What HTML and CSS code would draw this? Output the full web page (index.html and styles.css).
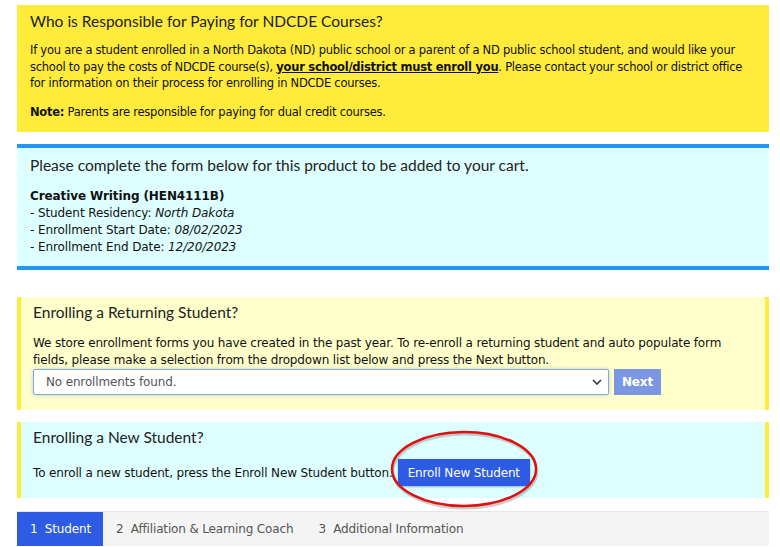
FILE: index.html
```html
<!DOCTYPE html>
<html lang="en">
<head>
    <meta charset="UTF-8">
    <meta name="viewport" content="width=device-width, initial-scale=1.0">
    <title>Enroll</title>
    <link rel="stylesheet" href="styles.css">
</head>
<body>
    <div class="page">
        <div class="panel panel-yellow">
            <h3>Who is Responsible for Paying for NDCDE Courses?</h3>
            <p>If you are a student enrolled in a North Dakota (ND) public school or a parent of a ND public school student, and would like your school to pay the costs of NDCDE course(s), <span class="must">your school/district must enroll you</span>. Please contact your school or district office for information on their process for enrolling in NDCDE courses.</p>
            <p><b>Note:</b> Parents are responsible for paying for dual credit courses.</p>
        </div>

        <div class="panel panel-blue">
            <h3>Please complete the form below for this product to be added to your cart.</h3>
            <p>
                <b>Creative Writing (HEN4111B)</b><br>
                - Student Residency: <i>North Dakota</i><br>
                - Enrollment Start Date: <i>08/02/2023</i><br>
                - Enrollment End Date: <i>12/20/2023</i>
            </p>
        </div>

        <div class="note note-returning">
            <h3>Enrolling a Returning Student?</h3>
            <p>We store enrollment forms you have created in the past year. To re-enroll a returning student and auto populate form fields, please make a selection from the dropdown list below and press the Next button.</p>
            <div class="select-row">
                <div class="select">
                    <span>No enrollments found.</span>
                    <svg width="10" height="6" viewBox="0 0 10 6"><path d="M1 1l4 4 4-4" fill="none" stroke="#333" stroke-width="1.6"/></svg>
                </div>
                <button class="btn btn-next">Next</button>
            </div>
        </div>

        <div class="note note-new">
            <h3>Enrolling a New Student?</h3>
            <div class="new-row">
                <span>To enroll a new student, press the Enroll New Student button.</span>
                <span class="circled">
                    <button class="btn btn-enroll">Enroll New Student</button>
                    <svg class="ring" width="160" height="86" viewBox="0 0 160 86">
                        <ellipse cx="80" cy="43" rx="72" ry="37" fill="none" stroke="#999" stroke-width="3" opacity="0.5" transform="translate(1,2)"/>
                        <ellipse cx="80" cy="43" rx="72" ry="37" fill="none" stroke="#e01010" stroke-width="2.5"/>
                    </svg>
                </span>
            </div>
        </div>

        <div class="tabs">
            <div class="tab active">1&nbsp; Student</div>
            <div class="tab">2&nbsp; Affiliation &amp; Learning Coach</div>
            <div class="tab">3&nbsp; Additional Information</div>
        </div>
    </div>
</body>
</html>
```

FILE: styles.css
```css
body {
    margin: 0;
    font-family: "DejaVu Sans", Verdana, sans-serif;
    font-size: 12px;
    letter-spacing: -0.15px;
    color: #111;
    background-color: #fff;
}

.page {
    width: 752px;
    padding: 5px 0 0 17px;
}

h3 {
    font-family: Lato, "Open Sans", sans-serif;
    font-weight: 400;
    font-size: 15.5px;
    letter-spacing: 0;
    color: #222;
    margin: 0 0 10px;
}

p {
    margin: 0;
    line-height: 16.5px;
}

.panel {
    padding: 7px 13px 12px;
}

.panel-yellow {
    background-color: #ffeb3b;
    font-size: 11.5px;
    letter-spacing: -0.25px;
}

.panel-yellow h3 {
    margin-bottom: 12px;
}

.panel-yellow p + p {
    margin-top: 12px;
}

.must {
    font-weight: bold;
    text-decoration: underline;
}

.panel-blue {
    margin-top: 12px;
    background-color: #ddffff;
    border-top: 4px solid #2196f3;
    border-bottom: 4px solid #2196f3;
    padding: 8px 13px 10px;
    letter-spacing: -0.1px;
}

.panel-blue h3 {
    margin-bottom: 14px;
}

.panel-blue p {
    line-height: 17px;
}

.note {
    border-left: 4px solid #ffeb3b;
    border-right: 4px solid #ffeb3b;
    padding: 6px 12px 15px;
}

.note h3 {
    margin-bottom: 14px;
}

.note-returning {
    margin-top: 27px;
    background-color: #ffffcc;
}

.note-new {
    margin-top: 12px;
    background-color: #ddffff;
    padding-bottom: 12px;
}

.note-new h3 {
    margin-bottom: 13px;
}

.select-row {
    display: flex;
    gap: 5px;
    margin-top: 1px;
}

.select {
    width: 556px;
    height: 24px;
    border: 1px solid #8aa8d0;
    border-radius: 2px;
    background-color: #fff;
    box-shadow: 0 0 4px rgba(120, 160, 210, 0.5);
    display: flex;
    align-items: center;
    justify-content: space-between;
    padding: 0 6px 0 12px;
    color: #555;
}

.btn {
    font-family: "DejaVu Sans", Verdana, sans-serif;
    font-size: 12px;
    letter-spacing: -0.15px;
    border: none;
    color: #fff;
    cursor: pointer;
}

.btn-next {
    width: 47px;
    height: 26px;
    background-color: #7b97e3;
    font-weight: bold;
}

.new-row {
    display: flex;
    align-items: center;
}

.circled {
    position: relative;
    margin-left: 5px;
}

.btn-enroll {
    display: block;
    height: 27px;
    padding: 0 10px;
    background-color: #2d5be3;
    box-shadow: 0 1px 2px rgba(0, 0, 0, 0.3);
}

.ring {
    position: absolute;
    left: -14px;
    top: -33px;
    pointer-events: none;
}

.tabs {
    display: flex;
    margin-top: 13px;
    background-color: #f4f4f4;
    border-top: 1px solid #e6e6e6;
    height: 34px;
    color: #555;
}

.tab {
    padding: 0 12px 0 13px;
    display: flex;
    align-items: center;
}

.tab.active {
    background-color: #2d5be3;
    color: #fff;
}
```
